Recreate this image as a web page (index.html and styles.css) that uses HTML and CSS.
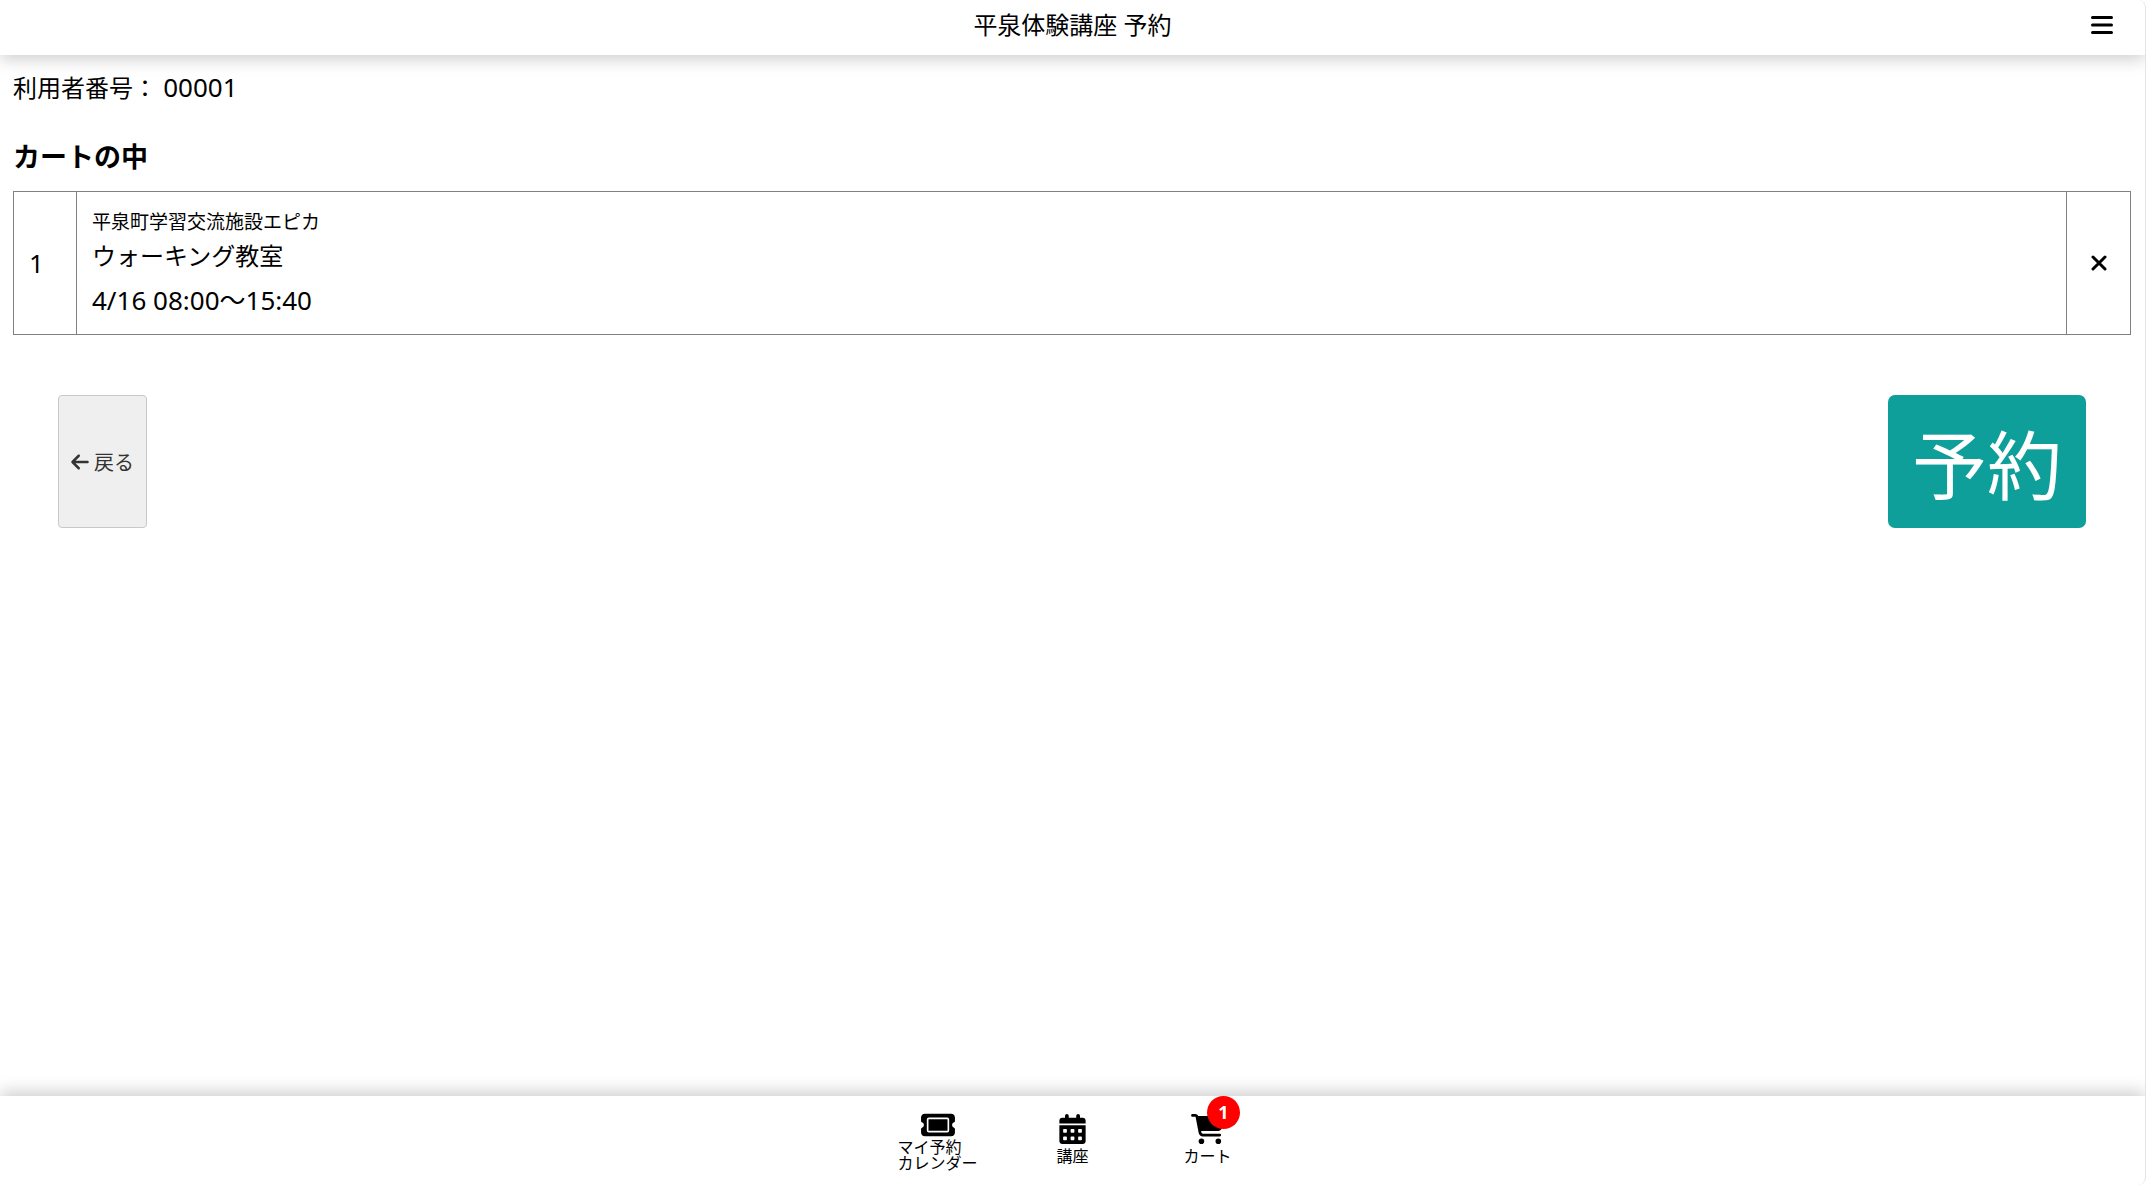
FILE: index.html
```
<!DOCTYPE html>
<html lang="ja">
<head>
    <meta charset="UTF-8">
    <meta name="viewport" content="width=device-width, initial-scale=1.0">
    <title>平泉体験講座 予約</title>
    <link rel="stylesheet" href="styles.css">
</head>
<body>
    <header class="header">
        <h1>平泉体験講座 予約</h1>
        <button type="button" class="menu-button" aria-label="メニュー">
            <svg width="22" height="18" viewBox="0 0 22 18"><path d="M1.5 1.5h19M1.5 9h19M1.5 16.5h19" fill="none" stroke="#000" stroke-width="3" stroke-linecap="round"/></svg>
        </button>
    </header>

    <main class="content">
        <p class="user-number">利用者番号： <span class="number">00001</span></p>
        <h2>カートの中</h2>
        <table class="cart">
            <tbody>
                <tr>
                    <td class="cart-no">1</td>
                    <td class="cart-item">
                        <div class="facility">平泉町学習交流施設エピカ</div>
                        <div class="course">ウォーキング教室</div>
                        <div class="date">4/16 08:00～15:40</div>
                    </td>
                    <td class="cart-delete">
                        <button type="button" aria-label="削除">
                            <svg width="16" height="16" viewBox="0 0 16 16"><path d="M2 2l12 12M14 2L2 14" fill="none" stroke="#000" stroke-width="3" stroke-linecap="round"/></svg>
                        </button>
                    </td>
                </tr>
            </tbody>
        </table>
        <div class="actions">
            <button type="button" class="back-button">
                <svg width="18" height="20" viewBox="0 0 448 512"><path fill="#333" d="M9.4 233.4c-12.5 12.5-12.5 32.8 0 45.3l160 160c12.5 12.5 32.8 12.5 45.3 0s12.5-32.8 0-45.3L109.2 288 416 288c17.7 0 32-14.3 32-32s-14.3-32-32-32l-306.7 0L214.6 118.6c12.5-12.5 12.5-32.8 0-45.3s-32.8-12.5-45.3 0l-160 160z"/></svg>
                戻る
            </button>
            <button type="submit" class="reserve-button">予約</button>
        </div>
    </main>

    <nav class="footer">
        <a href="#" class="nav-item">
            <svg class="ticket-icon" width="34" height="24" viewBox="0 52 576 408"><path d="M64 64C28.7 64 0 92.7 0 128v64c0 8.8 7.4 15.7 15.7 18.6C34.5 217.1 48 235 48 256s-13.5 38.9-32.3 45.4C7.4 304.3 0 311.2 0 320v64c0 35.3 28.7 64 64 64H512c35.3 0 64-28.7 64-64V320c0-8.8-7.4-15.7-15.7-18.6C541.5 294.9 528 277 528 256s13.5-38.9 32.3-45.4c8.3-2.9 15.7-9.8 15.7-18.6V128c0-35.3-28.7-64-64-64H64z"/><rect x="112" y="144" width="352" height="224" rx="20" fill="none" stroke="#fff" stroke-width="28"/></svg>
            <span>マイ予約<br>カレンダー</span>
        </a>
        <a href="#" class="nav-item">
            <svg class="tall-icon" width="27" height="30" viewBox="0 0 448 512"><path d="M128 0c17.7 0 32 14.3 32 32V64H288V32c0-17.7 14.3-32 32-32s32 14.3 32 32V64h48c26.5 0 48 21.5 48 48v48H0V112C0 85.5 21.5 64 48 64H96V32c0-17.7 14.3-32 32-32zM0 192H448V464c0 26.5-21.5 48-48 48H48c-26.5 0-48-21.5-48-48z"/><g fill="#fff"><rect x="64" y="256" width="64" height="64" rx="14"/><rect x="192" y="256" width="64" height="64" rx="14"/><rect x="320" y="256" width="64" height="64" rx="14"/><rect x="64" y="384" width="64" height="64" rx="14"/><rect x="192" y="384" width="64" height="64" rx="14"/><rect x="320" y="384" width="64" height="64" rx="14"/></g></svg>
            <span>講座</span>
        </a>
        <a href="#" class="nav-item">
            <svg class="tall-icon" width="34" height="30" viewBox="0 0 576 512"><path d="M0 24C0 10.7 10.7 0 24 0H69.5c22 0 41.5 12.8 50.6 32h411c26.3 0 45.5 25 38.6 50.4l-41 152.3c-8.5 31.4-37 53.3-69.5 53.3H170.7l5.4 28.5c2.2 11.3 12.1 19.5 23.6 19.5H488c13.3 0 24 10.7 24 24s-10.7 24-24 24H199.7c-34.6 0-64.3-24.6-70.7-58.5L77.4 54.5c-.7-3.8-4-6.5-7.9-6.5H24C10.7 48 0 37.3 0 24zM128 464a48 48 0 1 1 96 0 48 48 0 1 1 -96 0zm336-48a48 48 0 1 1 0 96 48 48 0 1 1 0-96z"/></svg>
            <span>カート</span>
            <span class="badge">1</span>
        </a>
    </nav>
</body>
</html>
```
FILE: styles.css
```
* {
    box-sizing: border-box;
}
body {
    font-family: "Noto Sans", "Noto Sans CJK JP", sans-serif;
    font-size: 24px;
    line-height: 32px;
    color: #000;
    background-color: #fff;
    margin: 0;
    min-height: 100vh;
    display: flex;
    flex-direction: column;
    border-right: 1px solid #e4e4e4;
    border-radius: 0 8px 8px 0;
}
button {
    font-family: inherit;
    cursor: pointer;
}
.header {
    display: grid;
    grid-template-columns: 1fr auto 1fr;
    align-items: center;
    height: 55px;
    padding: 0 20px;
    box-shadow: 0 4px 16px rgba(0, 0, 0, 0.2);
}
.header h1 {
    grid-column: 2;
    margin: 0;
    padding-bottom: 6px;
    font-size: 24px;
    font-weight: 400;
}
.menu-button {
    display: flex;
    justify-self: end;
    padding: 8px 12px;
    margin-bottom: 5px;
    border: none;
    background: none;
}
.content {
    flex: 1;
    padding: 16px 14px 16px 13px;
}
.user-number {
    margin: 0 0 37px;
}
.number,
.cart-no,
.date {
    font-size: 26px;
}
h2 {
    margin: 0 0 18px;
    font-size: 27px;
    line-height: 32px;
}
.cart {
    width: 100%;
    border-collapse: collapse;
}
.cart td {
    border: 1px solid #808080;
    padding: 15px;
}
.cart .cart-no {
    width: 63px;
}
.cart .cart-delete {
    width: 64px;
    padding: 0;
}
.cart-delete button {
    display: flex;
    margin: 0 auto;
    padding: 8px;
    border: none;
    background: none;
}
.facility {
    font-size: 19px;
    line-height: 30px;
}
.course {
    line-height: 38px;
}
.date {
    padding-top: 6px;
    line-height: 38px;
}
.actions {
    display: flex;
    justify-content: space-between;
    margin-top: 60px;
    padding: 0 45px;
}
.back-button {
    display: flex;
    align-items: center;
    gap: 5px;
    padding: 0 12px;
    border: 1px solid #c8c8c8;
    border-radius: 4px;
    background-color: #efefef;
    color: #333;
    font-size: 20px;
}
.reserve-button {
    height: 133px;
    padding: 0 24px;
    border: none;
    border-radius: 7px;
    background-color: #0f9f9b;
    color: #fff;
    font-size: 75px;
}
.footer {
    display: flex;
    justify-content: center;
    height: 89px;
    box-shadow: 0 -4px 16px rgba(0, 0, 0, 0.2);
}
.nav-item {
    position: relative;
    display: flex;
    flex-direction: column;
    align-items: center;
    padding-top: 17px;
    width: 135px;
    font-size: 16px;
    line-height: 16px;
    color: #000;
    text-decoration: none;
}
.ticket-icon {
    margin-bottom: 2px;
}
.tall-icon {
    margin: 1px 0 4px;
}
.badge {
    position: absolute;
    top: 0;
    right: 35px;
    width: 33px;
    height: 33px;
    border-radius: 50%;
    background-color: #f00;
    color: #fff;
    font-size: 18px;
    font-weight: 700;
    line-height: 33px;
    text-align: center;
}
```
